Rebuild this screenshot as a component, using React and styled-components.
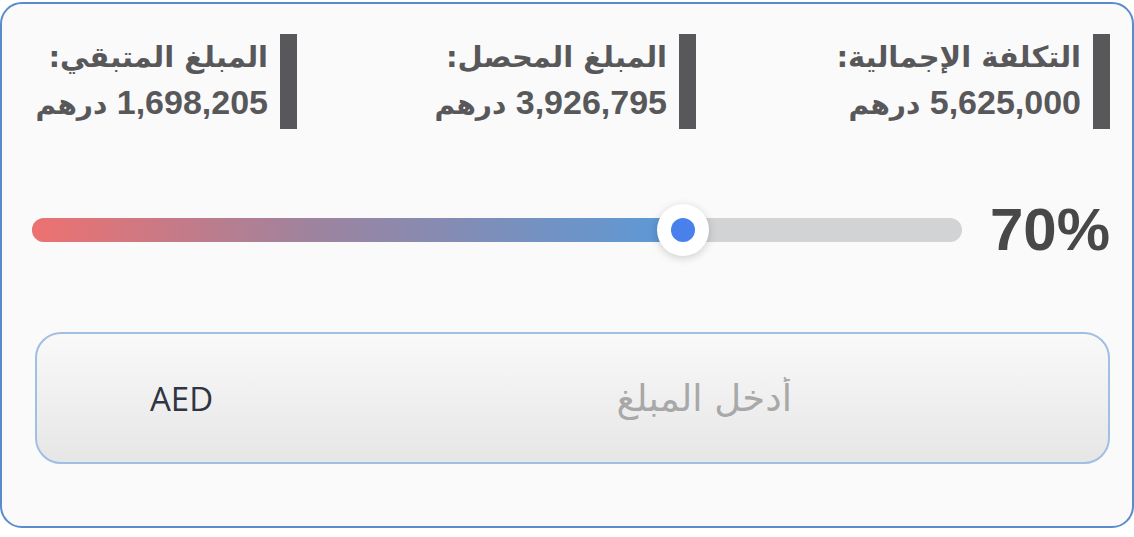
import React from 'react'
import styled, { createGlobalStyle } from 'styled-components'

const GlobalStyle = createGlobalStyle`
  html, body {
    margin: 0;
    padding: 0;
    background: #ffffff;
  }
  body {
    font-family: "Liberation Sans", "DejaVu Sans", sans-serif;
  }
`

const Card = styled.div`
  box-sizing: border-box;
  width: 1134px;
  height: 526px;
  margin-top: 2px;
  border: 2.5px solid #5a8bcf;
  border-radius: 22px;
  background: #fafafa;
  padding: 30px 22px 0 30px;
`

const Stats = styled.div`
  direction: rtl;
  display: grid;
  grid-template-columns: 414px 399px 1fr;
`

const Stat = styled.div`
  display: flex;
  align-items: stretch;
  gap: 12px;
  height: 95px;
`

const Bar = styled.div`
  flex: none;
  width: 17px;
  background: #58585a;
`

const StatText = styled.div`
  display: flex;
  flex-direction: column;
  justify-content: center;
  color: #58585a;
  font-weight: 700;
  white-space: nowrap;
`

const StatTitle = styled.div`
  font-family: "DejaVu Sans", sans-serif;
  font-size: 29px;
  line-height: 44px;
`

const StatValue = styled.div`
  font-size: 34px;
  line-height: 46px;
  font-family: "Liberation Sans", "DejaVu Sans", sans-serif;
`

const Currency = styled.span`
  font-family: "DejaVu Sans", sans-serif;
  font-size: 28px;
`

const SliderRow = styled.div`
  display: flex;
  align-items: center;
  gap: 28px;
  margin-top: 75px;
  height: 52px;
`

const Track = styled.div`
  position: relative;
  flex: 1;
  height: 24px;
  border-radius: 12px;
  background: #d2d3d5;
`

const Fill = styled.div`
  height: 100%;
  border-radius: 12px 0 0 12px;
  background: linear-gradient(90deg, #ee7170 0%, #9b84a0 45%, #5a9ad8 100%);
`

const Thumb = styled.div`
  position: absolute;
  top: 50%;
  width: 52px;
  height: 52px;
  margin-left: -26px;
  margin-top: -26px;
  border-radius: 50%;
  background: #ffffff;
  box-shadow: 0 2px 8px rgba(0, 0, 0, 0.18);
  display: flex;
  align-items: center;
  justify-content: center;

  &::after {
    content: '';
    width: 24px;
    height: 24px;
    border-radius: 50%;
    background: #4a80ec;
  }
`

const Percent = styled.div`
  font-size: 60px;
  font-weight: 700;
  color: #484848;
  line-height: 1;
`

const AmountBox = styled.label`
  box-sizing: border-box;
  display: flex;
  align-items: center;
  margin: 76px 0 0 3px;
  height: 132px;
  border: 2px solid #a0bfe3;
  border-radius: 26px;
  background: linear-gradient(180deg, #f9f9f9 0%, #e6e6e7 100%);
  padding-left: 113px;
`

const Unit = styled.span`
  font-family: "Open Sans", sans-serif;
  font-size: 33px;
  color: #2f3641;
`

const AmountInput = styled.input`
  flex: 1;
  min-width: 0;
  border: none;
  background: transparent;
  outline: none;
  direction: rtl;
  text-align: right;
  padding: 0 316px 0 0;
  font-family: "DejaVu Sans", sans-serif;
  font-size: 37px;
  color: #333;

  &::placeholder {
    color: #a8a8a8;
  }
`

const stats = [
  { title: 'التكلفة الإجمالية:', value: '5,625,000' },
  { title: 'المبلغ المحصل:', value: '3,926,795' },
  { title: 'المبلغ المتبقي:', value: '1,698,205' },
]

export default function App() {
  const percent = 70
  return (
    <>
      <GlobalStyle />
      <Card>
        <Stats>
          {stats.map(s => (
            <Stat key={s.title}>
              <Bar />
              <StatText>
                <StatTitle>{s.title}</StatTitle>
                <StatValue>
                  <bdi>{s.value}</bdi> <Currency>درهم</Currency>
                </StatValue>
              </StatText>
            </Stat>
          ))}
        </Stats>
        <SliderRow>
          <Track>
            <Fill style={{ width: `${percent}%` }} />
            <Thumb style={{ left: `${percent}%` }} />
          </Track>
          <Percent>{percent}%</Percent>
        </SliderRow>
        <AmountBox>
          <Unit>AED</Unit>
          <AmountInput placeholder="أدخل المبلغ" />
        </AmountBox>
      </Card>
    </>
  )
}
